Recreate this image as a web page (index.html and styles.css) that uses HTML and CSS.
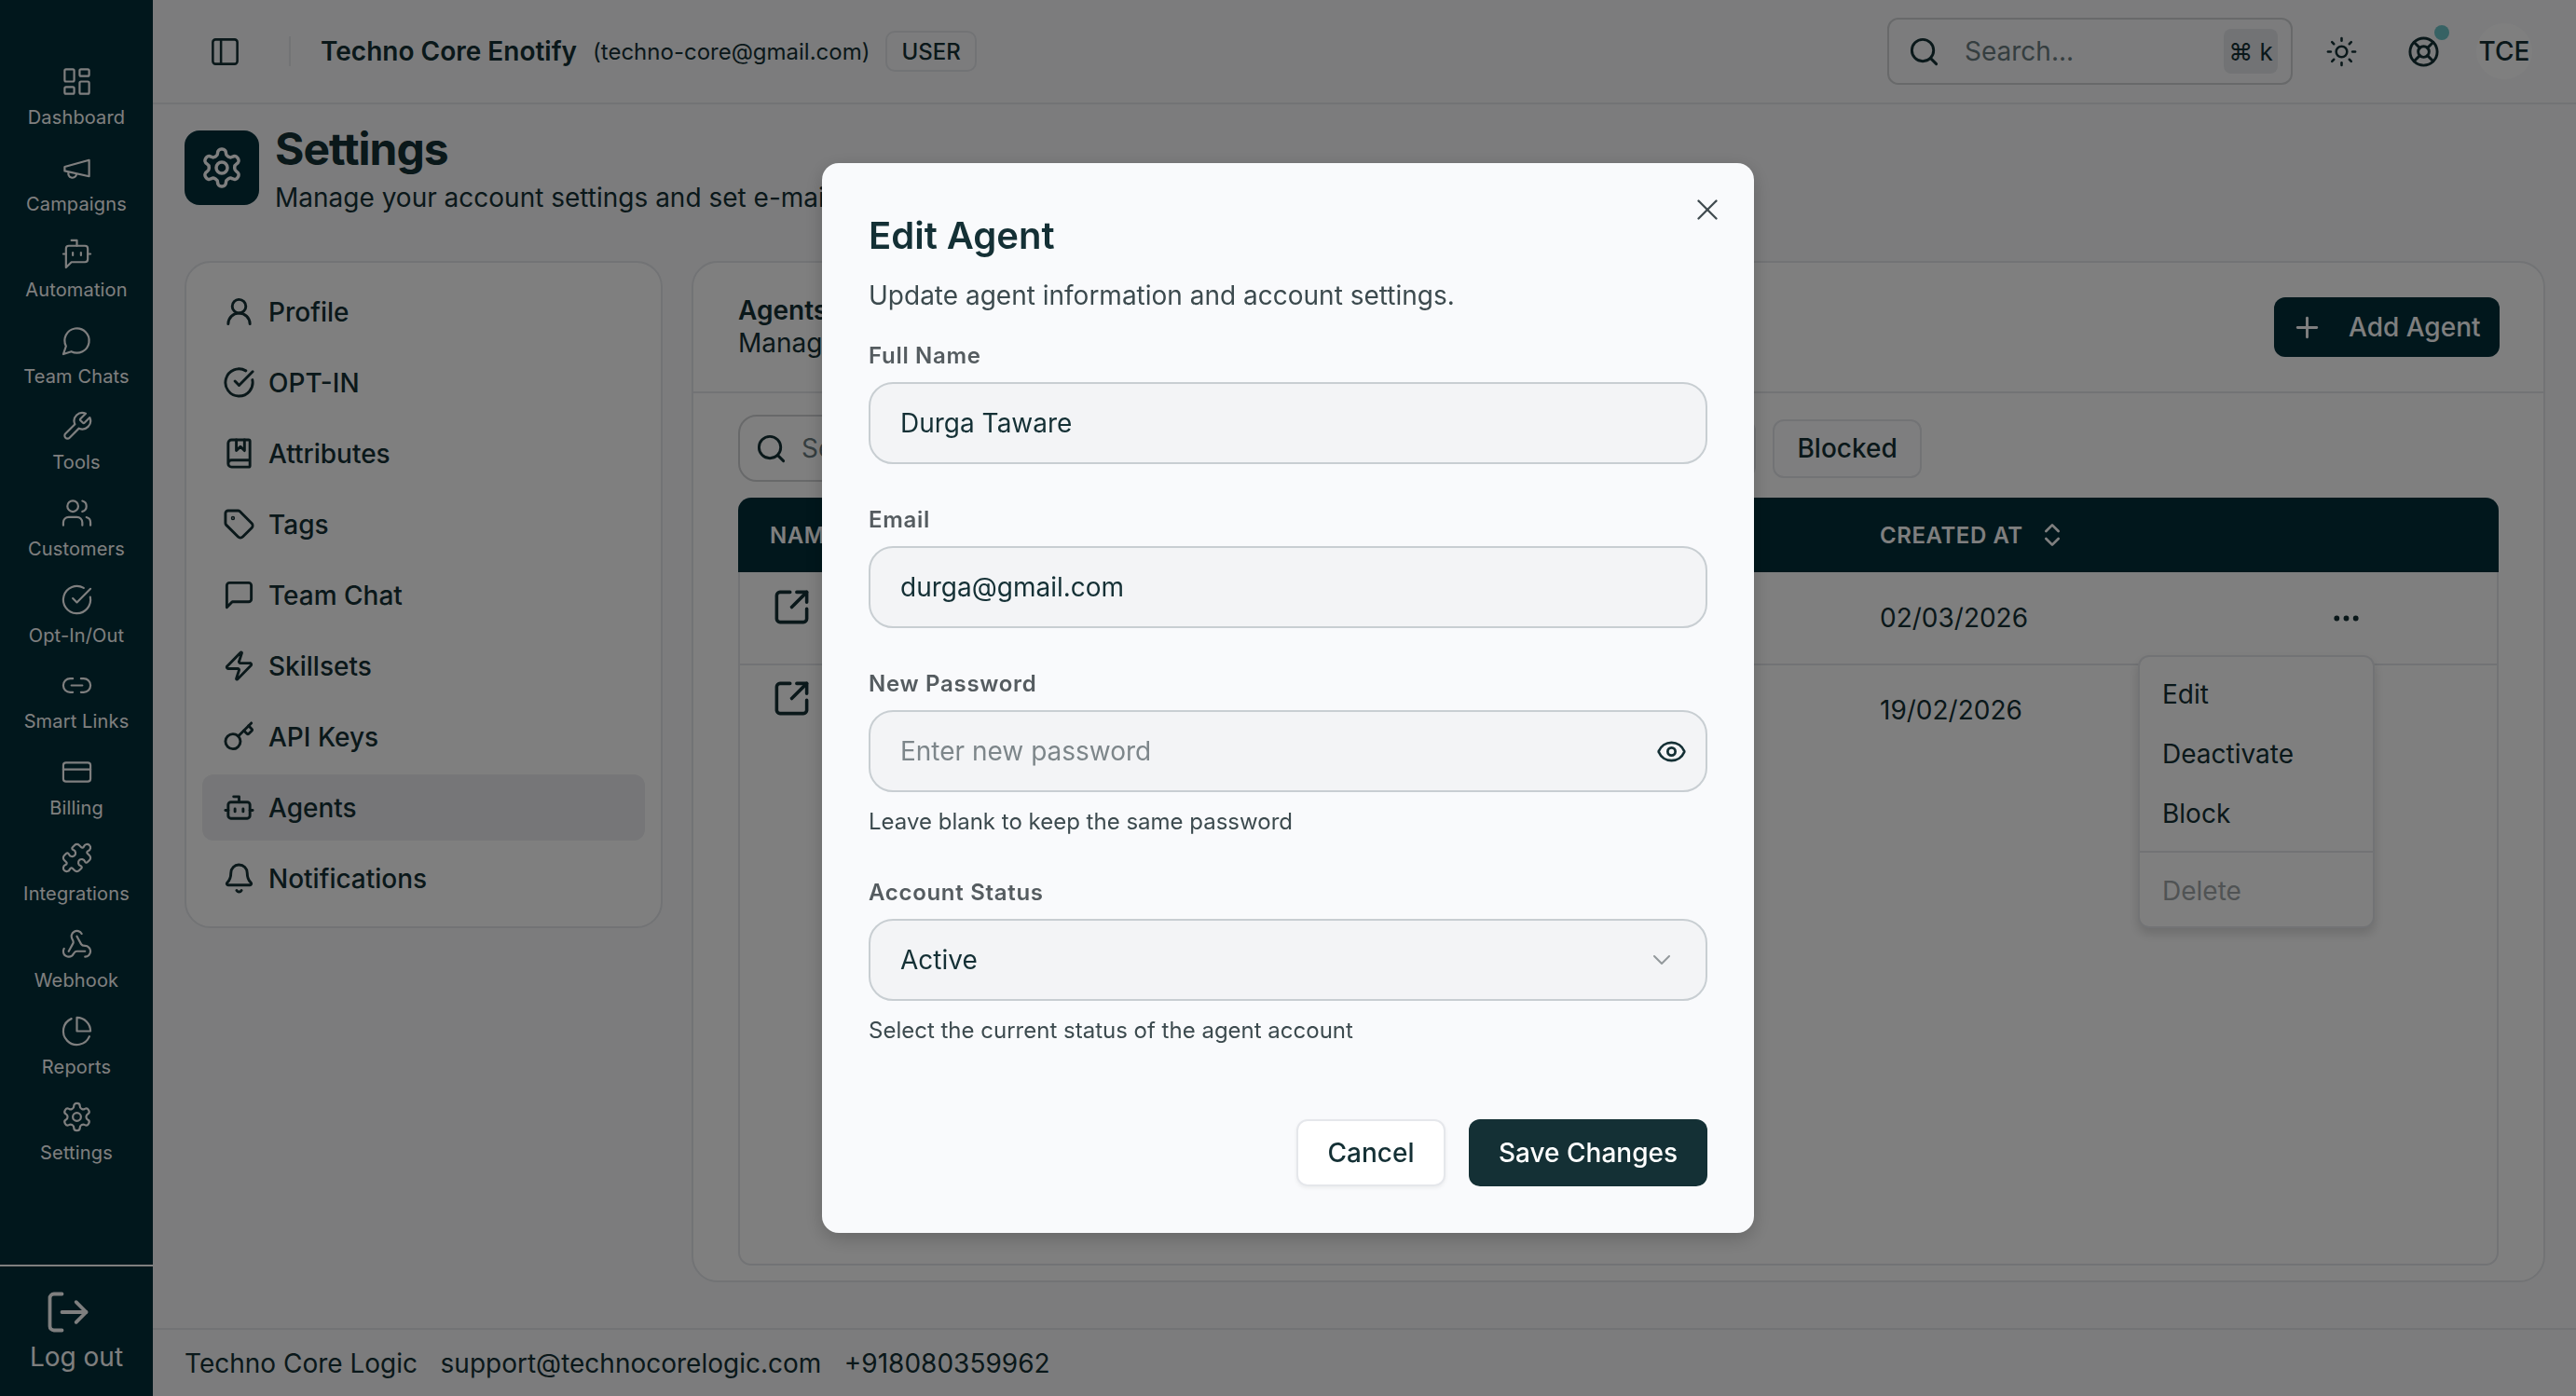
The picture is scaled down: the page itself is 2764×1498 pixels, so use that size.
FILE: index.html
```html
<!DOCTYPE html>
<html lang="en">
<head>
    <meta charset="UTF-8">
    <meta name="viewport" content="width=device-width, initial-scale=1.0">
    <title>Settings - Agents</title>
    <link rel="stylesheet" href="styles.css">
</head>
<body>
    <!-- icon sprite -->
    <svg class="sprite" xmlns="http://www.w3.org/2000/svg">
        <symbol id="i-dashboard" viewBox="0 0 24 24"><rect x="3" y="3" width="7" height="9" rx="1"/><rect x="14" y="3" width="7" height="5" rx="1"/><rect x="14" y="12" width="7" height="9" rx="1"/><rect x="3" y="16" width="7" height="5" rx="1"/></symbol>
        <symbol id="i-megaphone" viewBox="0 0 24 24"><path d="m3 11 18-5v12L3 14v-3z"/><path d="M11.6 16.8a3 3 0 1 1-5.8-1.6"/></symbol>
        <symbol id="i-bot-message" viewBox="0 0 24 24"><path d="M12 6V2H8"/><path d="m8 18-4 4V8a2 2 0 0 1 2-2h12a2 2 0 0 1 2 2v8a2 2 0 0 1-2 2Z"/><path d="M2 12h2"/><path d="M9 11v2"/><path d="M15 11v2"/><path d="M20 12h2"/></symbol>
        <symbol id="i-message-circle" viewBox="0 0 24 24"><path d="M7.9 20A9 9 0 1 0 4 16.1L2 22Z"/></symbol>
        <symbol id="i-wrench" viewBox="0 0 24 24"><path d="M14.7 6.3a1 1 0 0 0 0 1.4l1.6 1.6a1 1 0 0 0 1.4 0l3.77-3.77a6 6 0 0 1-7.94 7.94l-6.91 6.91a2.12 2.12 0 0 1-3-3l6.91-6.91a6 6 0 0 1 7.94-7.94l-3.76 3.76z"/></symbol>
        <symbol id="i-users" viewBox="0 0 24 24"><path d="M16 21v-2a4 4 0 0 0-4-4H6a4 4 0 0 0-4 4v2"/><circle cx="9" cy="7" r="4"/><path d="M22 21v-2a4 4 0 0 0-3-3.87"/><path d="M16 3.13a4 4 0 0 1 0 7.75"/></symbol>
        <symbol id="i-check" viewBox="0 0 24 24"><path d="M21.801 10A10 10 0 1 1 17 3.335"/><path d="m9 11 3 3L22 4"/></symbol>
        <symbol id="i-link" viewBox="0 0 24 24"><path d="M9 17H7A5 5 0 0 1 7 7h2"/><path d="M15 7h2a5 5 0 1 1 0 10h-2"/><path d="M8 12h8"/></symbol>
        <symbol id="i-card" viewBox="0 0 24 24"><rect x="2" y="5" width="20" height="14" rx="2"/><path d="M2 10h20"/></symbol>
        <symbol id="i-puzzle" viewBox="0 0 24 24"><path d="M19.439 7.85c-.049.322.059.648.289.878l1.568 1.568c.47.47.706 1.087.706 1.704s-.235 1.233-.706 1.704l-1.611 1.611a.98.98 0 0 1-.837.276c-.47-.07-.802-.48-.968-.925a2.501 2.501 0 1 0-3.214 3.214c.446.166.855.497.925.968a.979.979 0 0 1-.276.837l-1.61 1.61a2.404 2.404 0 0 1-1.705.707 2.402 2.402 0 0 1-1.704-.706l-1.568-1.568a1.026 1.026 0 0 0-.877-.29c-.493.074-.84.504-1.02.968a2.5 2.5 0 1 1-3.237-3.237c.464-.18.894-.527.967-1.02a1.026 1.026 0 0 0-.289-.877l-1.568-1.568A2.402 2.402 0 0 1 1.998 12c0-.617.236-1.234.706-1.704L4.23 8.77c.24-.24.581-.353.917-.303.515.077.877.528 1.073 1.01a2.5 2.5 0 1 0 3.259-3.259c-.482-.196-.933-.558-1.01-1.073-.05-.336.062-.676.303-.917l1.525-1.525A2.402 2.402 0 0 1 12 1.998c.617 0 1.234.236 1.704.706l1.568 1.568c.23.23.556.338.877.29.493-.074.84-.504 1.02-.968a2.5 2.5 0 1 1 3.237 3.237c-.464.18-.894.527-.967 1.02Z"/></symbol>
        <symbol id="i-webhook" viewBox="0 0 24 24"><path d="M18 16.98h-5.99c-1.1 0-1.95.94-2.48 1.9A4 4 0 0 1 2 17c.01-.7.2-1.4.57-2"/><path d="m6 17 3.13-5.78c.53-.97.1-2.18-.5-3.1a4 4 0 1 1 6.89-4.06"/><path d="m12 6 3.13 5.73C15.66 12.7 16.9 13 18 13a4 4 0 0 1 0 8"/></symbol>
        <symbol id="i-pie" viewBox="0 0 24 24"><path d="M21.21 15.89A10 10 0 1 1 8 2.83"/><path d="M22 12A10 10 0 0 0 12 2v10z"/></symbol>
        <symbol id="i-settings" viewBox="0 0 24 24"><path d="M12.22 2h-.44a2 2 0 0 0-2 2v.18a2 2 0 0 1-1 1.73l-.43.25a2 2 0 0 1-2 0l-.15-.08a2 2 0 0 0-2.73.73l-.22.38a2 2 0 0 0 .73 2.73l.15.1a2 2 0 0 1 1 1.72v.51a2 2 0 0 1-1 1.74l-.15.09a2 2 0 0 0-.73 2.73l.22.38a2 2 0 0 0 2.73.73l.15-.08a2 2 0 0 1 2 0l.43.25a2 2 0 0 1 1 1.73V20a2 2 0 0 0 2 2h.44a2 2 0 0 0 2-2v-.18a2 2 0 0 1 1-1.73l.43-.25a2 2 0 0 1 2 0l.15.08a2 2 0 0 0 2.73-.73l.22-.39a2 2 0 0 0-.73-2.73l-.15-.08a2 2 0 0 1-1-1.74v-.5a2 2 0 0 1 1-1.74l.15-.09a2 2 0 0 0 .73-2.73l-.22-.38a2 2 0 0 0-2.73-.73l-.15.08a2 2 0 0 1-2 0l-.43-.25a2 2 0 0 1-1-1.73V4a2 2 0 0 0-2-2z"/><circle cx="12" cy="12" r="3"/></symbol>
        <symbol id="i-logout" viewBox="0 0 24 24"><path d="M9 21H5a2 2 0 0 1-2-2V5a2 2 0 0 1 2-2h4"/><path d="m16 17 5-5-5-5"/><path d="M21 12H9"/></symbol>
        <symbol id="i-panel" viewBox="0 0 24 24"><rect x="3" y="3" width="18" height="18" rx="2"/><path d="M9 3v18"/></symbol>
        <symbol id="i-user" viewBox="0 0 24 24"><circle cx="12" cy="8" r="5"/><path d="M20 21a8 8 0 0 0-16 0"/></symbol>
        <symbol id="i-book" viewBox="0 0 24 24"><path d="M10 2v8l3-3 3 3V2"/><path d="M4 19.5v-15A2.5 2.5 0 0 1 6.5 2H19a1 1 0 0 1 1 1v18a1 1 0 0 1-1 1H6.5a1 1 0 0 1 0-5H20"/></symbol>
        <symbol id="i-tag" viewBox="0 0 24 24"><path d="M12.586 2.586A2 2 0 0 0 11.172 2H4a2 2 0 0 0-2 2v7.172a2 2 0 0 0 .586 1.414l8.704 8.704a2.426 2.426 0 0 0 3.42 0l6.58-6.58a2.426 2.426 0 0 0 0-3.42z"/><circle cx="7.5" cy="7.5" r=".5"/></symbol>
        <symbol id="i-message-square" viewBox="0 0 24 24"><path d="M21 15a2 2 0 0 1-2 2H7l-4 4V5a2 2 0 0 1 2-2h14a2 2 0 0 1 2 2z"/></symbol>
        <symbol id="i-zap" viewBox="0 0 24 24"><path d="M4 14a1 1 0 0 1-.78-1.63l9.9-10.2a.5.5 0 0 1 .86.46l-1.92 6.02A1 1 0 0 0 13 10h7a1 1 0 0 1 .78 1.63l-9.9 10.2a.5.5 0 0 1-.86-.46l1.92-6.02A1 1 0 0 0 11 14z"/></symbol>
        <symbol id="i-key" viewBox="0 0 24 24"><path d="m15.5 7.5 2.3 2.3a1 1 0 0 0 1.4 0l2.1-2.1a1 1 0 0 0 0-1.4L19 4"/><path d="m21 2-9.6 9.6"/><circle cx="7.5" cy="15.5" r="5.5"/></symbol>
        <symbol id="i-bot" viewBox="0 0 24 24"><path d="M12 8V4H8"/><rect x="4" y="8" width="16" height="12" rx="2"/><path d="M2 14h2"/><path d="M20 14h2"/><path d="M15 13v2"/><path d="M9 13v2"/></symbol>
        <symbol id="i-bell" viewBox="0 0 24 24"><path d="M10.268 21a2 2 0 0 0 3.464 0"/><path d="M3.262 15.326A1 1 0 0 0 4 17h16a1 1 0 0 0 .74-1.673C19.41 13.956 18 12.499 18 8A6 6 0 0 0 6 8c0 4.499-1.411 5.956-2.738 7.326"/></symbol>
        <symbol id="i-search" viewBox="0 0 24 24"><circle cx="11" cy="11" r="8"/><path d="m21 21-4.3-4.3"/></symbol>
        <symbol id="i-sun" viewBox="0 0 24 24"><circle cx="12" cy="12" r="4"/><path d="M12 2v2"/><path d="M12 20v2"/><path d="m4.93 4.93 1.41 1.41"/><path d="m17.66 17.66 1.41 1.41"/><path d="M2 12h2"/><path d="M20 12h2"/><path d="m6.34 17.66-1.41 1.41"/><path d="m19.07 4.93-1.41 1.41"/></symbol>
        <symbol id="i-buoy" viewBox="0 0 24 24"><circle cx="12" cy="12" r="10"/><path d="m4.93 4.93 4.24 4.24"/><path d="m14.83 9.17 4.24-4.24"/><path d="m14.83 14.83 4.24 4.24"/><path d="m9.17 14.83-4.24 4.24"/><circle cx="12" cy="12" r="4"/></symbol>
        <symbol id="i-plus" viewBox="0 0 24 24"><path d="M5 12h14"/><path d="M12 5v14"/></symbol>
        <symbol id="i-external" viewBox="0 0 24 24"><path d="M21 13v6a2 2 0 0 1-2 2H5a2 2 0 0 1-2-2V5a2 2 0 0 1 2-2h6"/><path d="m21 3-9 9"/><path d="M15 3h6v6"/></symbol>
        <symbol id="i-sort" viewBox="0 0 24 24"><path d="m7 15 5 5 5-5"/><path d="m7 9 5-5 5 5"/></symbol>
        <symbol id="i-dots" viewBox="0 0 24 24"><circle cx="12" cy="12" r="1"/><circle cx="19" cy="12" r="1"/><circle cx="5" cy="12" r="1"/></symbol>
        <symbol id="i-x" viewBox="0 0 24 24"><path d="M18 6 6 18"/><path d="m6 6 12 12"/></symbol>
        <symbol id="i-eye" viewBox="0 0 24 24"><path d="M2.062 12.348a1 1 0 0 1 0-.696 10.75 10.75 0 0 1 19.876 0 1 1 0 0 1 0 .696 10.75 10.75 0 0 1-19.876 0"/><circle cx="12" cy="12" r="3"/></symbol>
        <symbol id="i-chevron" viewBox="0 0 24 24"><path d="m6 9 6 6 6-6"/></symbol>
    </svg>

    <aside class="sidebar">
        <nav class="side-nav">
            <a class="side-link"><svg class="icon"><use href="#i-dashboard"/></svg><span>Dashboard</span></a>
            <a class="side-link"><svg class="icon"><use href="#i-megaphone"/></svg><span>Campaigns</span></a>
            <a class="side-link"><svg class="icon"><use href="#i-bot-message"/></svg><span>Automation</span></a>
            <a class="side-link"><svg class="icon"><use href="#i-message-circle"/></svg><span>Team Chats</span></a>
            <a class="side-link"><svg class="icon"><use href="#i-wrench"/></svg><span>Tools</span></a>
            <a class="side-link"><svg class="icon"><use href="#i-users"/></svg><span>Customers</span></a>
            <a class="side-link"><svg class="icon"><use href="#i-check"/></svg><span>Opt-In/Out</span></a>
            <a class="side-link"><svg class="icon"><use href="#i-link"/></svg><span>Smart Links</span></a>
            <a class="side-link"><svg class="icon"><use href="#i-card"/></svg><span>Billing</span></a>
            <a class="side-link"><svg class="icon"><use href="#i-puzzle"/></svg><span>Integrations</span></a>
            <a class="side-link"><svg class="icon"><use href="#i-webhook"/></svg><span>Webhook</span></a>
            <a class="side-link"><svg class="icon"><use href="#i-pie"/></svg><span>Reports</span></a>
            <a class="side-link"><svg class="icon"><use href="#i-settings"/></svg><span>Settings</span></a>
        </nav>
        <a class="logout"><svg class="icon"><use href="#i-logout"/></svg><span>Log out</span></a>
    </aside>

    <div class="page">
        <header class="topbar">
            <svg class="icon panel-toggle"><use href="#i-panel"/></svg>
            <span class="topbar-sep"></span>
            <span class="org-name">Techno Core Enotify</span>
            <span class="org-email">(techno-core@gmail.com)</span>
            <span class="role-badge">USER</span>
            <div class="global-search">
                <svg class="icon"><use href="#i-search"/></svg>
                <span class="global-search-text">Search...</span>
                <kbd>⌘ k</kbd>
            </div>
            <svg class="icon sun"><use href="#i-sun"/></svg>
            <span class="help">
                <svg class="icon"><use href="#i-buoy"/></svg>
                <span class="help-dot"></span>
            </span>
            <span class="avatar">TCE</span>
        </header>

        <main class="content">
            <div class="page-title">
                <div class="page-title-icon"><svg class="icon"><use href="#i-settings"/></svg></div>
                <div>
                    <h1>Settings</h1>
                    <p>Manage your account settings and set e-mail preferences.</p>
                </div>
            </div>

            <div class="settings">
                <nav class="settings-nav">
                    <a class="settings-link"><svg class="icon"><use href="#i-user"/></svg>Profile</a>
                    <a class="settings-link"><svg class="icon"><use href="#i-check"/></svg>OPT-IN</a>
                    <a class="settings-link"><svg class="icon"><use href="#i-book"/></svg>Attributes</a>
                    <a class="settings-link"><svg class="icon"><use href="#i-tag"/></svg>Tags</a>
                    <a class="settings-link"><svg class="icon"><use href="#i-message-square"/></svg>Team Chat</a>
                    <a class="settings-link"><svg class="icon"><use href="#i-zap"/></svg>Skillsets</a>
                    <a class="settings-link"><svg class="icon"><use href="#i-key"/></svg>API Keys</a>
                    <a class="settings-link active"><svg class="icon"><use href="#i-bot"/></svg>Agents</a>
                    <a class="settings-link"><svg class="icon"><use href="#i-bell"/></svg>Notifications</a>
                </nav>

                <section class="agents">
                    <div class="agents-head">
                        <div>
                            <h2>Agents</h2>
                            <p>Manage</p>
                        </div>
                        <button class="add-agent"><svg class="icon"><use href="#i-plus"/></svg>Add Agent</button>
                    </div>
                    <div class="agents-body">
                        <div class="toolbar">
                            <div class="table-search">
                                <svg class="icon"><use href="#i-search"/></svg>
                                <span>Se</span>
                            </div>
                            <button class="filter">All</button>
                            <button class="filter">Active</button>
                            <button class="filter">Inactive</button>
                            <button class="filter">Blocked</button>
                        </div>
                        <div class="table-wrap">
                            <div class="table-row table-head">
                                <span>NAME</span>
                                <span class="sort-col">CREATED AT <svg class="icon"><use href="#i-sort"/></svg></span>
                                <span></span>
                            </div>
                            <div class="table-row">
                                <svg class="icon row-link"><use href="#i-external"/></svg>
                                <span>02/03/2026</span>
                                <svg class="icon row-menu"><use href="#i-dots"/></svg>
                            </div>
                            <div class="table-row">
                                <svg class="icon row-link"><use href="#i-external"/></svg>
                                <span>19/02/2026</span>
                                <span></span>
                            </div>
                            <ul class="row-dropdown">
                                <li>Edit</li>
                                <li>Deactivate</li>
                                <li>Block</li>
                                <li class="divider"></li>
                                <li class="muted">Delete</li>
                            </ul>
                        </div>
                    </div>
                </section>
            </div>
        </main>

        <footer class="footer">
            <span>Techno Core Logic</span>
            <span>support@technocorelogic.com</span>
            <span>+918080359962</span>
        </footer>
    </div>

    <div class="overlay">
        <div class="modal">
            <svg class="icon modal-close"><use href="#i-x"/></svg>
            <h3>Edit Agent</h3>
            <p class="modal-sub">Update agent information and account settings.</p>

            <div class="field">
                <label>Full Name</label>
                <div class="input">Durga Taware</div>
            </div>
            <div class="field">
                <label>Email</label>
                <div class="input">durga@gmail.com</div>
            </div>
            <div class="field">
                <label>New Password</label>
                <div class="input placeholder">Enter new password <svg class="icon eye"><use href="#i-eye"/></svg></div>
                <small>Leave blank to keep the same password</small>
            </div>
            <div class="field">
                <label>Account Status</label>
                <div class="input">Active <svg class="icon chevron"><use href="#i-chevron"/></svg></div>
                <small>Select the current status of the agent account</small>
            </div>

            <div class="modal-actions">
                <button class="btn-cancel">Cancel</button>
                <button class="btn-save">Save Changes</button>
            </div>
        </div>
    </div>
</body>
</html>
```

FILE: styles.css
```css
* {
    margin: 0;
    padding: 0;
    box-sizing: border-box;
}

html, body {
    height: 100%;
    overflow: hidden;
}

body {
    display: flex;
    font-family: Inter, "Noto Sans", sans-serif;
    font-size: 28px;
    color: #143035;
    background: #f8f9fb;
}

button {
    font: inherit;
    color: inherit;
    background: none;
    border: none;
}

.sprite {
    position: absolute;
    width: 0;
    height: 0;
}

.icon {
    width: 35px;
    height: 35px;
    flex-shrink: 0;
    fill: none;
    stroke: currentColor;
    stroke-width: 2;
    stroke-linecap: round;
    stroke-linejoin: round;
}

/* sidebar */
.sidebar {
    width: 164px;
    flex-shrink: 0;
    display: flex;
    flex-direction: column;
    background: #022e38;
    color: #fff;
}

.side-nav {
    flex: 1;
    padding-top: 70px;
}

.side-link {
    height: 92.6px;
    display: flex;
    flex-direction: column;
    align-items: center;
}

.side-link .icon {
    stroke-width: 1.5;
}

.side-link span {
    margin-top: 8px;
    font-size: 20px;
    line-height: 26px;
    letter-spacing: 0.15px;
}

.logout {
    height: 141px;
    border-top: 2px solid #fff;
    display: flex;
    flex-direction: column;
    align-items: center;
    padding-top: 23px;
    font-size: 28px;
    line-height: 34px;
}

.logout .icon {
    width: 52px;
    height: 52px;
    margin-left: -18px;
    margin-bottom: 5px;
    stroke-width: 1.75;
}

/* top bar */
.page {
    flex: 1;
    min-width: 0;
    display: flex;
    flex-direction: column;
}

.topbar {
    height: 112px;
    flex-shrink: 0;
    display: flex;
    align-items: center;
    padding-left: 60px;
    border-bottom: 2px solid #e4e6ea;
}

.panel-toggle {
    stroke-width: 1.75;
}

.topbar-sep {
    width: 2px;
    height: 32px;
    margin: 0 32px 0 51px;
    background: #e4e6ea;
}

.org-name {
    font-weight: 600;
}

.org-email {
    margin-left: 17px;
    font-size: 24px;
}

.role-badge {
    margin-left: 17px;
    height: 44px;
    padding: 0 15px;
    display: flex;
    align-items: center;
    font-size: 24px;
    font-weight: 500;
    border: 2px solid #e4e6ea;
    border-radius: 10px;
}

.global-search {
    margin-left: auto;
    width: 435px;
    height: 72px;
    display: flex;
    align-items: center;
    padding: 0 14px 0 20px;
    border: 2px solid #d0d2d4;
    border-radius: 12px;
}

.global-search-text {
    margin-left: 26px;
    color: #6b7c80;
}

.global-search kbd {
    margin-left: auto;
    height: 48px;
    width: 58px;
    display: flex;
    align-items: center;
    justify-content: center;
    font-family: inherit;
    font-size: 26px;
    background: #e4e6ea;
    border-radius: 8px;
}

.sun {
    margin-left: 35px;
    stroke-width: 1.75;
}

.help {
    position: relative;
    display: flex;
    margin-left: 53px;
}

.help-dot {
    position: absolute;
    top: -11px;
    right: -10px;
    width: 16px;
    height: 16px;
    border-radius: 50%;
    background: #6fc4c8;
}

.avatar {
    width: 60px;
    height: 60px;
    margin: 0 47px 0 39px;
    display: flex;
    align-items: center;
    justify-content: center;
    font-weight: 500;
    border-radius: 50%;
    background: #fff;
}

/* content */
.content {
    flex: 1;
    min-height: 0;
    display: flex;
    flex-direction: column;
    padding: 28px 33px 49px 34px;
}

.page-title {
    display: flex;
    gap: 17px;
    height: 80px;
    margin-bottom: 60px;
}

.page-title-icon {
    width: 80px;
    height: 80px;
    display: flex;
    align-items: center;
    justify-content: center;
    background: #022e38;
    color: #fff;
    border-radius: 16px;
}

.page-title-icon .icon {
    width: 48px;
    height: 48px;
    stroke-width: 1.75;
}

.page-title h1 {
    font-size: 48px;
    font-weight: 700;
    line-height: 48px;
    margin-top: -4px;
    letter-spacing: -1px;
}

.page-title p {
    margin-top: 10px;
    line-height: 36px;
}

.settings {
    flex: 1;
    min-height: 0;
    display: flex;
    gap: 31px;
    align-items: flex-start;
}

.settings-nav {
    width: 513px;
    flex-shrink: 0;
    padding: 17px 17px 16px;
    display: flex;
    flex-direction: column;
    gap: 5px;
    background: #fff;
    border: 2px solid #e4e6ea;
    border-radius: 28px;
}

.settings-link {
    height: 71px;
    display: flex;
    align-items: center;
    gap: 14px;
    padding-left: 22px;
    font-weight: 500;
    border-radius: 12px;
}

.settings-link.active {
    background: #ecedf0;
}

.agents {
    flex: 1;
    align-self: stretch;
    display: flex;
    flex-direction: column;
    background: #fff;
    border: 2px solid #e4e6ea;
    border-radius: 28px;
    overflow: hidden;
}

.agents-head {
    height: 140px;
    flex-shrink: 0;
    display: flex;
    justify-content: space-between;
    align-items: center;
    padding: 0 47px 0 48px;
    border-bottom: 2px solid #e4e6ea;
}

.agents-head h2 {
    font-size: 28px;
    font-weight: 600;
    line-height: 34px;
}

.agents-head p {
    line-height: 36px;
}

.add-agent {
    height: 64px;
    width: 242px;
    display: flex;
    align-items: center;
    gap: 27px;
    padding-left: 18px;
    font-weight: 500;
    color: #fff;
    background: #022e38;
    border-radius: 12px;
}

.agents-body {
    flex: 1;
    min-height: 0;
    display: flex;
    flex-direction: column;
    padding: 23px 48px 16px;
}

.toolbar {
    display: flex;
    align-items: center;
    gap: 18px;
    height: 72px;
    margin-bottom: 17px;
}

.table-search {
    width: 659px;
    height: 72px;
    display: flex;
    align-items: center;
    gap: 15px;
    padding-left: 16px;
    color: #6b7c80;
    border: 2px solid #d0d2d4;
    border-radius: 20px;
}

.table-search .icon {
    color: #143035;
}

.filter {
    height: 63px;
    padding: 0 24px;
    font-weight: 500;
    background: #fdfdfe;
    border: 2px solid #e4e6ea;
    border-radius: 12px;
}

.table-wrap {
    position: relative;
    flex: 1;
    border: 2px solid #e4e6ea;
    border-top: none;
    border-radius: 14px;
}

.table-row {
    display: grid;
    grid-template-columns: 1223px 483px 48px;
    align-items: center;
    height: 100px;
    border-bottom: 2px solid #e4e6ea;
}

.table-row:nth-child(3) {
    height: 95px;
    border-bottom: none;
}

.table-head {
    height: 80px;
    grid-template-columns: 1225px 481px 48px;
    font-size: 24px;
    font-weight: 600;
    letter-spacing: 0.55px;
    color: #fff;
    background: #022e38;
    border-bottom: none;
    border-radius: 14px 14px 0 0;
    margin: 0 -2px;
}

.table-head span:first-child {
    padding-left: 34px;
}

.sort-col {
    display: flex;
    align-items: center;
    gap: 15px;
}

.sort-col .icon {
    width: 32px;
    height: 32px;
}

.row-link {
    width: 43px;
    height: 43px;
    margin: -24px 0 0 34px;
}

.row-menu {
    fill: currentColor;
}

.row-dropdown {
    position: absolute;
    top: 169px;
    right: 131px;
    width: 254px;
    height: 293px;
    padding: 8px 0;
    list-style: none;
    background: #fff;
    border: 2px solid #e4e6ea;
    border-radius: 12px;
    box-shadow: 0 6px 12px rgba(0, 0, 0, 0.15);
}

.row-dropdown li {
    height: 64px;
    padding-left: 24px;
    display: flex;
    align-items: center;
}

.row-dropdown .divider {
    height: 2px;
    margin: 8px 0 9px;
    background: #e4e6ea;
}

.row-dropdown .muted {
    color: #a0a6a8;
}

/* footer */
.footer {
    height: 73px;
    flex-shrink: 0;
    display: flex;
    align-items: center;
    gap: 24.5px;
    padding-left: 34px;
    border-top: 2px solid #e4e6ea;
}

/* edit modal */
.overlay {
    position: fixed;
    inset: 0;
    display: flex;
    align-items: center;
    justify-content: center;
    background: rgba(0, 0, 0, 0.5);
}

.modal {
    position: relative;
    width: 1000px;
    height: 1148px;
    padding: 54px 50px 0 50px;
    background: #f9fafc;
    border-radius: 18px;
    box-shadow: 0 6px 20px rgba(0, 0, 0, 0.2);
}

.modal-close {
    position: absolute;
    top: 31px;
    right: 31px;
    width: 38px;
    height: 38px;
    stroke-width: 1.5;
    color: #3f4b4f;
}

.modal h3 {
    font-size: 40px;
    font-weight: 600;
    line-height: 48px;
}

.modal-sub {
    margin-top: 20px;
    margin-bottom: 29px;
    line-height: 40px;
    color: #3c4a4e;
}

.field {
    margin-bottom: 44px;
}

.field label {
    display: block;
    font-size: 24px;
    font-weight: 600;
    letter-spacing: 0.7px;
    line-height: 32px;
    margin-bottom: 12px;
    color: #555c60;
}

.input {
    height: 88px;
    display: flex;
    align-items: center;
    justify-content: space-between;
    padding: 0 20px 0 32px;
    background: #f3f4f6;
    border: 2px solid #c8ced2;
    border-radius: 26px;
}

.input.placeholder {
    color: #7d868a;
}

.eye {
    width: 33px;
    height: 33px;
    color: #143035;
}

.chevron {
    width: 32px;
    height: 32px;
    margin-right: 11px;
    stroke-width: 1.5;
    color: #93999c;
}

.field small {
    display: block;
    margin-top: 16px;
    font-size: 24px;
    line-height: 32px;
    color: #3c4a4e;
}

.modal-actions {
    position: absolute;
    left: 50px;
    right: 50px;
    bottom: 50px;
    display: flex;
    justify-content: flex-end;
    gap: 25px;
}

.modal-actions button {
    height: 72px;
    font-weight: 500;
    border-radius: 12px;
}

.btn-cancel {
    width: 160px;
    background: #fff;
    border: 2px solid #e5e7eb;
    box-shadow: 0 2px 4px rgba(0, 0, 0, 0.06);
}

.btn-save {
    width: 256px;
    color: #fff;
    background: #143035;
}
```
